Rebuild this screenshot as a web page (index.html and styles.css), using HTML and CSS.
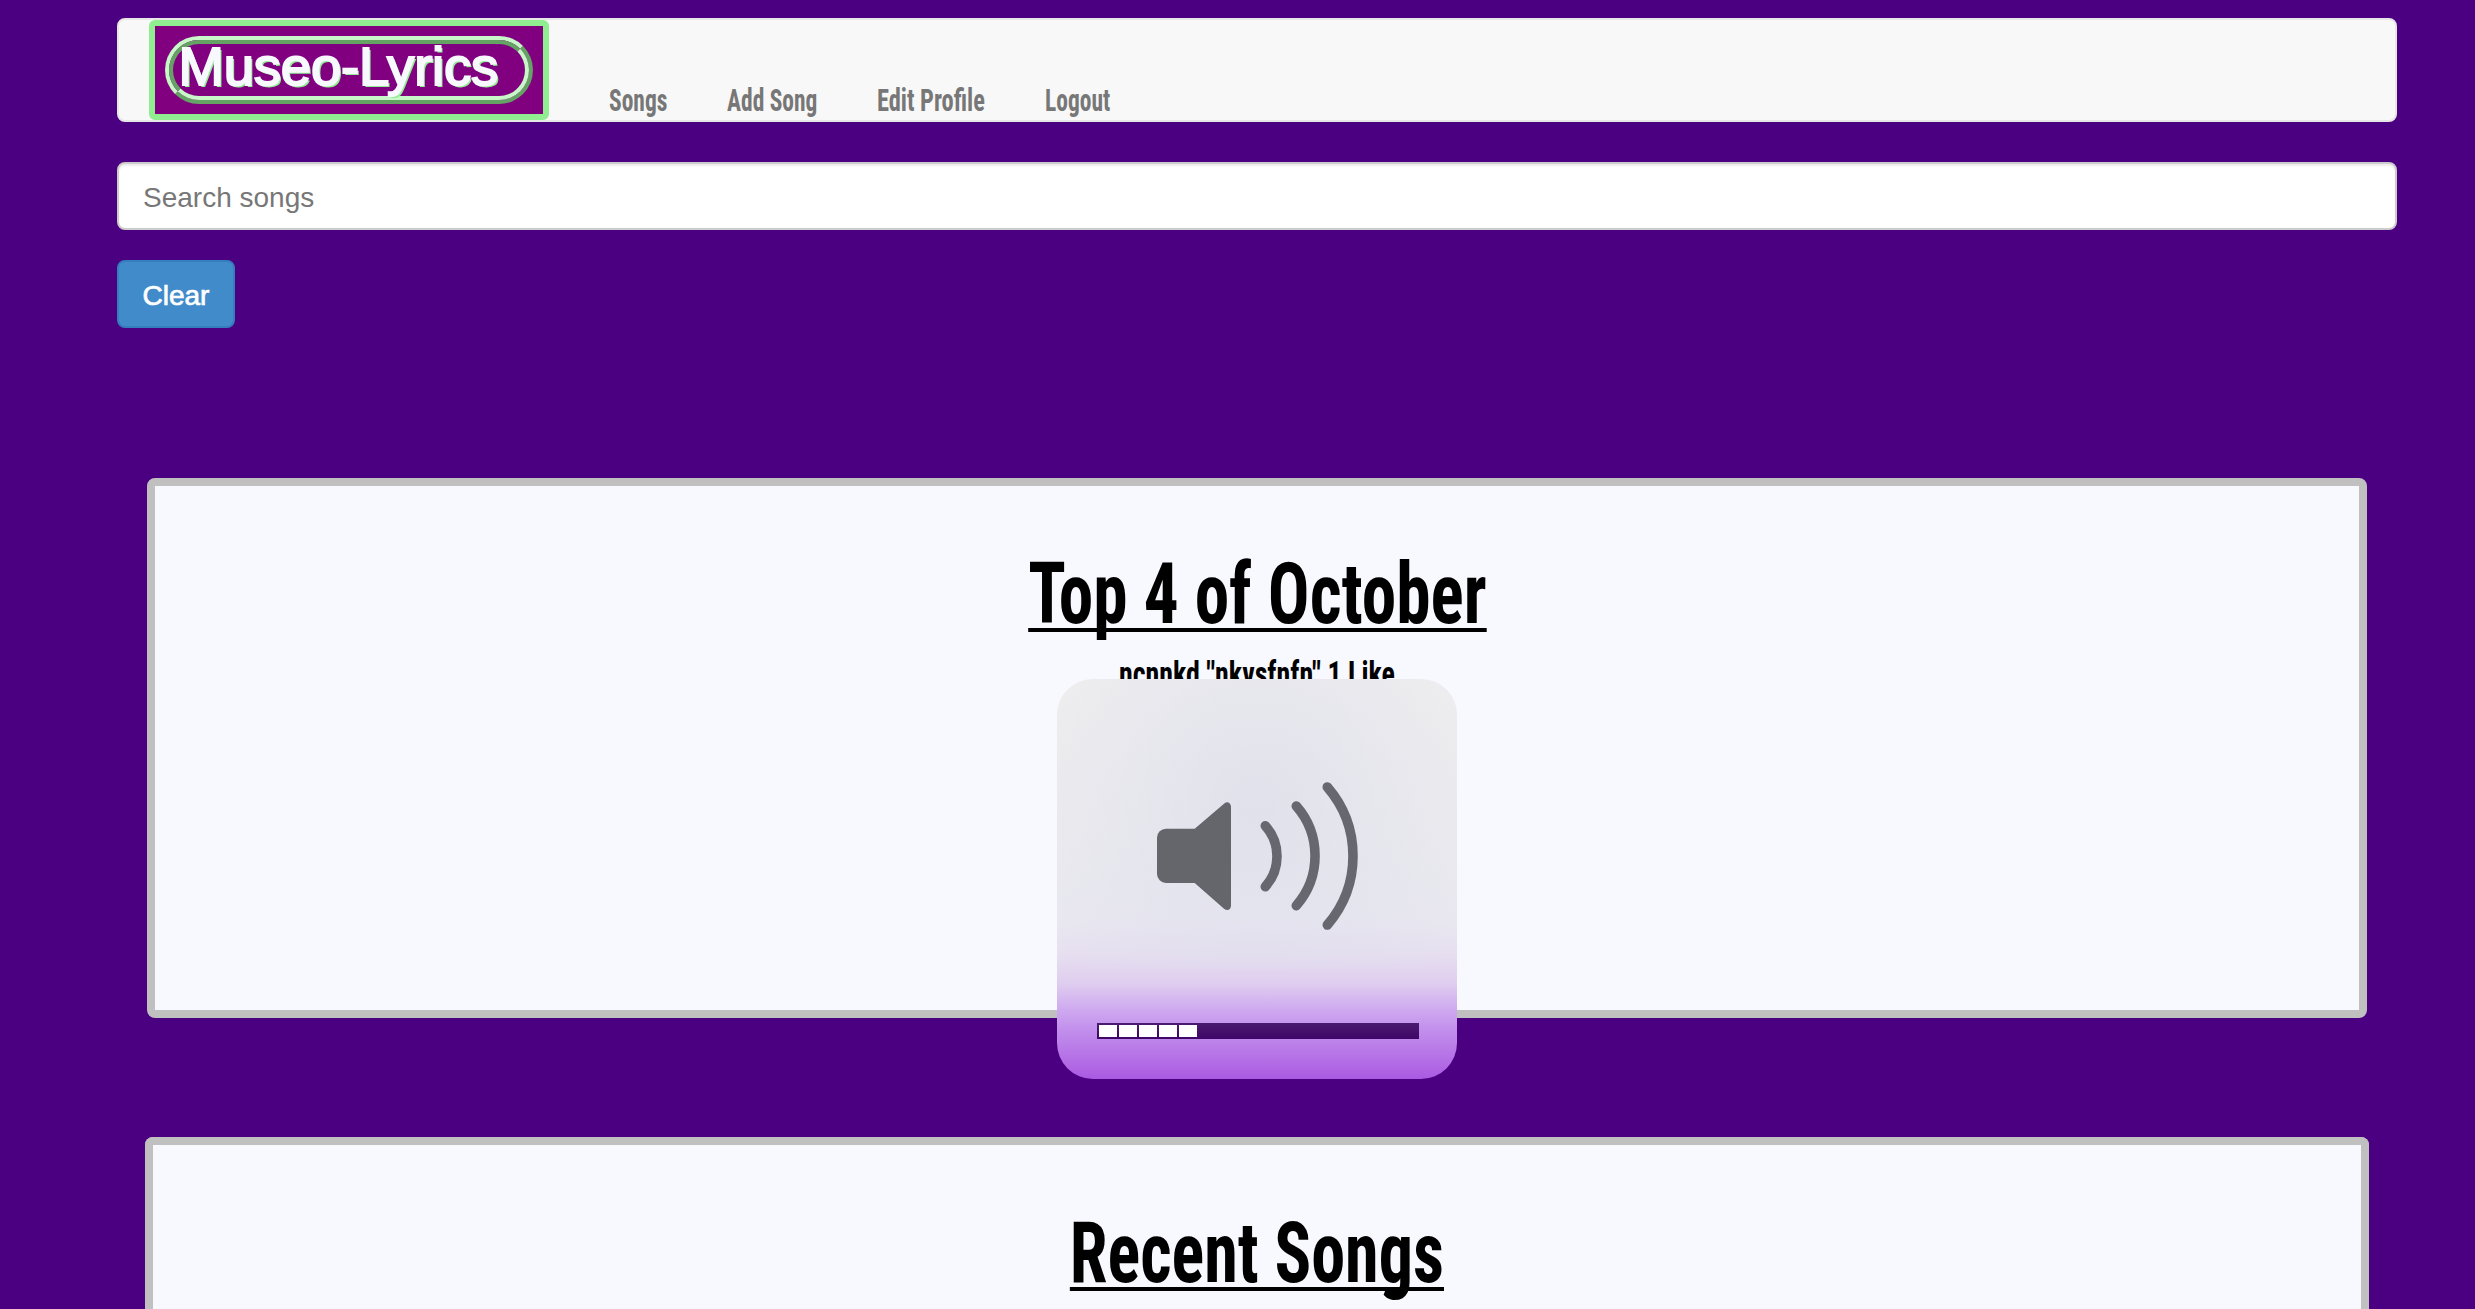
FILE: index.html
```
<!DOCTYPE html>
<html lang="en">
<head>
<meta charset="utf-8">
<title>Museo-Lyrics</title>
<link rel="stylesheet" href="styles.css">
</head>
<body>
<div class="container">
  <nav class="navbar">
    <a class="brand"><span class="brand-outer"><span class="brand-inner">Museo-Lyrics</span></span></a>
    <ul class="menu">
      <li class="item songs"><a>Songs</a></li>
      <li class="item add"><a>Add Song</a></li>
      <li class="item edit"><a>Edit Profile</a></li>
      <li class="item logout"><a>Logout</a></li>
    </ul>
  </nav>
  <input class="search" type="text" placeholder="Search songs">
  <button class="clear">Clear</button>
  <section class="panel top">
    <h1 class="title"><span>Top 4 of October</span></h1>
    <p class="song"><span>ncnnkd "nkvsfnfn" 1 Like</span></p>
  </section>
  <section class="panel recent">
    <h1 class="title"><span>Recent Songs</span></h1>
  </section>
</div>
<div class="volume">
  <svg class="speaker" width="400" height="300" viewBox="0 0 400 300">
    <path class="cone" d="M109 149.7H137.7L167 124.7Q170.5 122 173 124.700Q174 126 174 128V226.500Q174 228.500 173 229.700Q170.500 232.500 167 229.700L137.700 204H109A9 9 0 0 1 100 195V158.700A9 9 0 0 1 109 149.700Z"/>
    <path class="wave" d="M208.300 146.700A45.600 45.600 0 0 1 208.300 207.700M239.300 127A75.700 75.700 0 0 1 239.300 226.700M270.300 108A105.500 105.500 0 0 1 270.300 246"/>
  </svg>
  <div class="level"><i></i><i></i><i></i><i></i><i></i></div>
</div>
</body>
</html>
```
FILE: styles.css
```
* { box-sizing: border-box; }
body {
  margin: 0;
  height: 1309px;
  position: relative;
  background: #4b0082;
  font-family: "Liberation Sans", sans-serif;
}
.container { width: 2280px; margin-left: 117px; padding-top: 18px; }
.navbar {
  display: flex;
  height: 104px;
  padding-left: 30px;
  background: #f8f8f8;
  border: 2px solid #e7e7e7;
  border-radius: 8px;
}
.brand {
  width: 400px;
  height: 100px;
  padding: 10px;
  background: #800080;
  border: 6px solid #90ee90;
  border-radius: 6px;
}
.brand-outer {
  display: block;
  width: 368px;
  height: 68px;
  border: 4px solid;
  border-color: #c8f7c8 #64a364 #64a364 #c8f7c8;
  border-radius: 34px;
}
.brand-inner {
  display: block;
  height: 60px;
  padding-left: 5.5px;
  border: 4px solid;
  border-color: #64a364 #c8f7c8 #c8f7c8 #64a364;
  border-radius: 30px;
  color: #f8f8ff;
  font-size: 54.5px;
  line-height: 45px;
  letter-spacing: -0.2px;
  -webkit-text-stroke: 2px #f8f8ff;
  text-shadow: 2px 2px #90ee90;
  white-space: nowrap;
}
.menu { display: flex; margin: 63px 0 0 60px; padding: 0; list-style: none; }
.item {
  flex: none;
  font: 700 31px/36px "Roboto Condensed", Roboto, sans-serif;
  font-stretch: 75%;
  color: #777;
  white-space: nowrap;
}
.item a { display: inline-block; transform: scaleX(0.757); transform-origin: left; }
.songs { width: 118px; }
.add { width: 150px; }
.edit { width: 168px; }
.edit a { transform: scaleX(0.787); }
.logout { width: 70px; }
.search {
  display: block;
  width: 100%;
  height: 68px;
  margin-top: 40px;
  padding: 3px 24px 0;
  border: 2px solid #ccc;
  border-radius: 8px;
  background: #fff;
  box-shadow: inset 0 2px 2px rgba(0, 0, 0, 0.075);
  font: 28px "Liberation Sans", sans-serif;
}
.search::placeholder { color: #777; opacity: 1; }
.clear {
  display: block;
  width: 118px;
  height: 68px;
  margin-top: 30px;
  padding: 3px 0 0;
  border: 2px solid #357ebd;
  border-radius: 8px;
  background: #428bca;
  color: #fff;
  font: 28px "Liberation Sans", sans-serif;
  -webkit-text-stroke: 0.7px #fff;
}
.panel {
  padding-top: 65px;
  background: #f8f8ff;
  border: 8px solid #c0c0c0;
  border-radius: 8px;
  color: #000;
  text-align: center;
}
.top { height: 540px; margin: 150px 30px 0; }
.recent { height: 172px; margin: 119px 28px 0; border-bottom: 0; border-radius: 8px 8px 0 0; }
.title { margin: 0; font: 700 86px/86px "Roboto Condensed", Roboto, sans-serif; font-stretch: 75%; }
.title span {
  display: inline-block;
  transform: scaleX(0.806);
  text-decoration: underline;
  text-decoration-thickness: 4px;
  text-underline-offset: 5px;
  text-decoration-skip-ink: none;
}
.recent .title span { transform: scaleX(0.793); }
.song { margin: 20px 0 0; font: 700 35px/35px "Roboto Condensed", Roboto, sans-serif; font-stretch: 75%; }
.song span { display: inline-block; transform: scaleX(0.798); }
.volume {
  position: absolute;
  left: 1057px;
  top: 679px;
  width: 400px;
  height: 400px;
  border-radius: 36px;
  overflow: hidden;
  background:
    radial-gradient(ellipse 230px 260px at 50% 46%, rgba(218, 218, 234, 0.6), rgba(222, 222, 236, 0.4) 50%, rgba(230, 230, 238, 0)) 0 0 / 400px 290px no-repeat,
    linear-gradient(#eeeeef 0, #ebebee 150px, #e9e8f0 240px, #e6dff0 275px, #dfcdef 305px, #cfaaf0 330px, #c290ec 350px, #b572e6 378px, #aa5ae2 400px);
}
.speaker { display: block; }
.cone { fill: #65656c; }
.wave { fill: none; stroke: #67676f; stroke-width: 9.6px; stroke-linecap: round; }
.level {
  display: flex;
  gap: 2px;
  width: 322px;
  height: 16px;
  margin: 44px 0 0 40px;
  padding: 2px;
  background: linear-gradient(#4c1b70, #3d0667);
}
.level i { width: 18px; height: 12px; background: #fff; }
```
